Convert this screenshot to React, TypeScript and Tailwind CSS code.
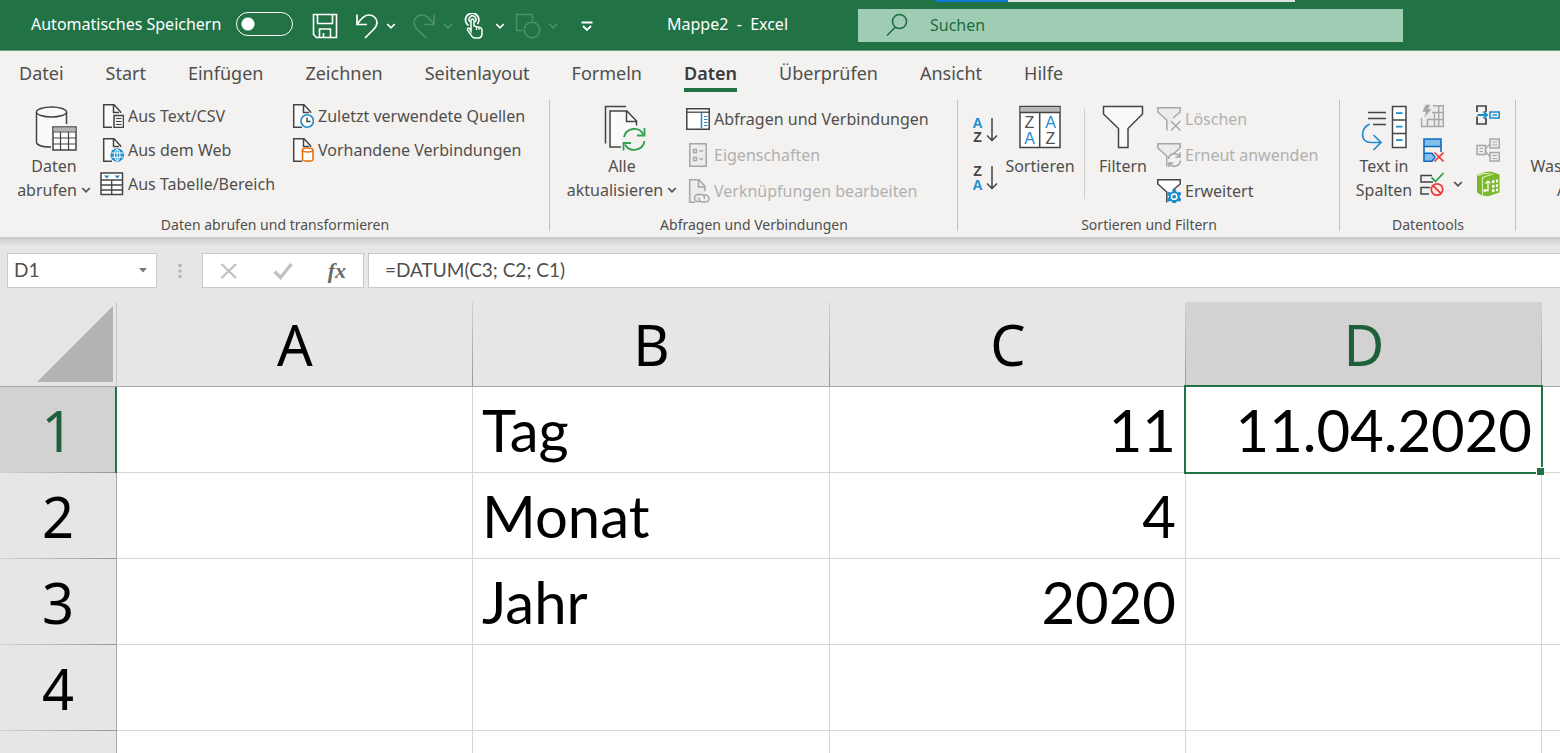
/**
 * Excel workbook window: title bar, data ribbon, formula bar and sheet
 */

import React, { useState } from 'react';
import clsx from 'clsx';

const DARK = '#444444';
const GRAY = '#a6a6a6';
const BLUE = '#1e8bcd';
const GREEN = '#2fa14f';

type IconProps = { w?: number; h?: number; className?: string; children?: React.ReactNode };

const Icon: React.FC<IconProps> = ({ w = 24, h = 24, className, children }) => (
  <svg
    width={w}
    height={h}
    viewBox={`0 0 ${w} ${h}`}
    fill="none"
    strokeWidth={1.5}
    className={clsx('shrink-0', className)}
    aria-hidden="true"
  >
    {children}
  </svg>
);

const Chevron: React.FC<{ className?: string }> = ({ className }) => (
  <Icon w={10} h={8} className={className}>
    <path d="M1.2 2l3.8 3.8L8.8 2" stroke="currentColor" strokeWidth={1.7} />
  </Icon>
);

// ---------- Title bar icons ----------

const SaveIcon = () => (
  <Icon w={26} h={26}>
    <path d="M1.5 1.5h23v23h-20l-3-3zM5.5 1.5v9h15v-9M7.5 24.5V16h11v8.5M11.5 24v-4" stroke="#fff" strokeWidth={1.6} />
  </Icon>
);

const UndoIcon: React.FC<{ flip?: boolean }> = ({ flip }) => (
  <Icon w={24} h={26} className={flip ? '-scale-x-100' : ''}>
    <path d="M2 1.5v10h10M2.5 11C6 5.500 9.5 2 14 2c4.500 0 8 3.500 8 7.500 0 3-1.500 5-3.500 7L10 25" stroke="currentColor" strokeWidth={1.7} />
  </Icon>
);

const TouchIcon = () => (
  <Icon w={20} h={26}>
    <path d="M4.5 12.5A6.700 6.700 0 1 1 13.500 11" stroke="#fff" strokeWidth={1.7} />
    <path d="M6 9a3.500 3.500 0 1 1 5 0" stroke="#fff" strokeWidth={1.4} />
    <path d="M7 18V7.500c0-2 3-2 3 0V13l6 1.500c1.500.4 2 1.500 2 2.500v3.500c0 3-2 4.500-4 4.500h-3c-2 0-3-1-4-3l-3.500-5c-.5-1.500 1-2.500 2-1.500z" fill="#217346" stroke="#fff" strokeWidth={1.5} />
    <path d="M12.500 14v3M15 14.500v2.500" stroke="#fff" strokeWidth={1.2} />
  </Icon>
);

const ShapesIcon = () => (
  <Icon w={26} h={26}>
    <path d="M7.5 17.5h-6v-16h16v6" stroke="currentColor" />
    <circle cx="17" cy="17" r="7.7" stroke="currentColor" />
  </Icon>
);

const CustomizeIcon = () => (
  <Icon w={12} h={11}>
    <path d="M.5 1.500h11M2 5l4 4 4-4" stroke="#fff" strokeWidth={1.8} />
  </Icon>
);

// ---------- Ribbon icons ----------

const DatabaseTableIcon = () => (
  <Icon w={48} h={46}>
    <g transform="translate(5 0)">
      <path d="M1.5 7v30c0 3 6 5.500 15 5.500V21H31V7z" fill="#fafafa" />
      <path d="M31.500 19V7M1.500 7v30c0 3 6 5 14.500 5" stroke={DARK} />
      <ellipse cx="16.5" cy="7" rx="15" ry="5" fill="#fafafa" stroke={DARK} />
      <path d="M18 22h23v23H18z" fill="#fff" stroke={DARK} />
      <path d="M18.500 22.500h22v4h-22z" fill="#b3b3b3" />
      <path d="M18 27h23M18 33h23M18 39h23M25.500 27v18M33.500 27v18" stroke={DARK} strokeWidth={1.2} />
    </g>
  </Icon>
);

const PagePath = () => (
  <>
    <path d="M4 1h10l6 7v15H4z" fill="#fafafa" />
    <path d="M12 23.200H3.700V.8H14l6.500 7V9M13.500 1v7.500H19" stroke={DARK} />
  </>
);

const TextCsvIcon = () => (
  <Icon>
    <PagePath />
    <path d="M14 11.500h9.500v12H14z" fill="#f3f2f1" stroke={DARK} />
    <path d="M16 14.500h5.500M16 17.500h5.500M16 20.500h5.500" stroke={DARK} strokeWidth={1.2} />
  </Icon>
);

const WebIcon = () => (
  <Icon>
    <PagePath />
    <circle cx="17.2" cy="17" r="6.8" fill={BLUE} />
    <ellipse cx="17.2" cy="17" rx="2.8" ry="5.6" stroke="#fff" strokeWidth={1} />
    <path d="M11.500 15h11.500M11.500 19.200h11.500M17.200 11v12" stroke="#fff" strokeWidth={1} />
  </Icon>
);

const TableRangeIcon = () => (
  <Icon>
    <path d="M1 1h21.500v21.500H1z" fill="#fff" stroke={DARK} />
    <path d="M1 8h21.500M1 13h21.500M1 18h21.500M11.700 8v14.500" stroke={DARK} strokeWidth={1.3} />
    <path d="M4 3.500h5.500L6.700 6.500zM14.500 3.500H20l-2.700 3z" fill={BLUE} />
  </Icon>
);

const RecentIcon = () => (
  <Icon>
    <PagePath />
    <circle cx="17.2" cy="17" r="6.2" fill="#fff" stroke={BLUE} strokeWidth={1.6} />
    <path d="M17 13.500v4h3.500" stroke={DARK} strokeWidth={1.4} />
  </Icon>
);

const ExistingIcon = () => (
  <Icon>
    <PagePath />
    <path d="M12.500 12v9.500c0 2.200 10.500 2.200 10.500 0V12" fill="#fff" stroke="#e9720e" strokeWidth={1.6} />
    <ellipse cx="17.700" cy="12" rx="5.300" ry="2" fill="#fff" stroke="#e9720e" strokeWidth={1.6} />
  </Icon>
);

const RefreshAllIcon = () => (
  <Icon w={48} h={46}>
    <g transform="translate(6 0)">
      <path d="M6 6h17l9 10v26H6z" fill="#fafafa" />
      <path d="M1.500 38.500v-37H22M17 42H6V6h17l9.500 10v4.500M22.500 6v10.500H32" stroke={DARK} />
      <circle cx="30" cy="34" r="12" fill="#f3f2f1" />
      <path d="M20 32a10.500 10.500 0 0 1 19.500-2.500M40.500 36A10.500 10.500 0 0 1 21 39.500" stroke={GREEN} strokeWidth={1.8} />
      <path d="M40.500 23v7.500H33M19.500 45.500V38H27" stroke={GREEN} strokeWidth={1.8} />
    </g>
  </Icon>
);

const PaneIcon = () => (
  <Icon>
    <path d="M.8 1.800h22.400v20.400H.8z" fill="#fff" stroke={DARK} />
    <path d="M.8 5.200h22.400" stroke={DARK} strokeWidth={1.3} />
    <path d="M15.500 6v15.500" stroke={BLUE} />
    <path d="M18 9.500h3.500M18 12.500h3.500M18 15.500h3.500M18 18.500h3.500" stroke={BLUE} strokeWidth={1.2} />
  </Icon>
);

const PropertiesIcon = () => (
  <Icon>
    <path d="M3.800.8h16.400v22.400H3.800z" fill="#ececec" stroke={GRAY} />
    <path d="M7.500 6.500h3v3h-3zM7.500 14.500h3v3h-3zM13.500 8H17M13.500 16H17" stroke={GRAY} strokeWidth={1.3} />
  </Icon>
);

const EditLinksIcon = () => (
  <Icon>
    <path d="M9 23.200H3.700V.8H13l6 6.500v5M12.500 1v7H19" fill="#ececec" stroke={GRAY} />
    <g stroke={GRAY} strokeWidth={1.5}>
      <path d="M14.500 22.500H12a3.500 3.500 0 0 1 0-7h3a3.500 3.500 0 0 1 3.300 4.500" />
      <path d="M17 16h2.500a3.500 3.500 0 0 1 0 7h-3a3.500 3.500 0 0 1-3.300-4.500" />
    </g>
  </Icon>
);

const SortIcon: React.FC<{ desc?: boolean }> = ({ desc }) => (
  <span className="flex items-center gap-[3px]">
    <span className="flex flex-col font-['Liberation_Sans',sans-serif] text-[14px] leading-[14px] font-bold">
      <span className={desc ? 'text-[#444444]' : 'text-[#1e8bcd]'}>{desc ? 'Z' : 'A'}</span>
      <span className={desc ? 'text-[#1e8bcd]' : 'text-[#444444]'}>{desc ? 'A' : 'Z'}</span>
    </span>
    <Icon w={12} h={26}>
      <path d="M6 1v22.500M1 18.500l5 5 5-5" stroke={DARK} />
    </Icon>
  </span>
);

const SortDialogIcon = () => (
  <span className="relative block h-[46px] w-[42px]">
    <Icon w={42} h={46}>
      <path d="M1 1.500h40v41H1z" fill="#fff" stroke={DARK} />
      <path d="M1.500 2h39v5h-39z" fill="#b8b8b8" />
      <path d="M1 7.500h40M20.700 7.500v35" stroke={DARK} />
    </Icon>
    <span className="absolute inset-x-0 top-[10px] grid grid-cols-2 text-center font-['Liberation_Sans',sans-serif] text-[16px] leading-4">
      <span>Z</span>
      <span className="text-[#1e8bcd]">A</span>
      <span className="text-[#1e8bcd]">A</span>
      <span>Z</span>
    </span>
  </span>
);

const FilterIcon = () => (
  <Icon w={42} h={46}>
    <path d="M1.500 1.500h39V9L26 23.500v19h-9.500v-19L1.500 9z" fill="#fafafa" stroke={DARK} />
  </Icon>
);

const SmallFunnel: React.FC<{ color: string }> = ({ color }) => (
  <>
    <path d="M1 1h22v4l-8 7v6h-5v-5.500L1 5z" fill={color === DARK ? '#fff' : '#ececec'} />
    <path d="M9.800 23.500V13L.8 5V.8h22.400V5L16 11" stroke={color} />
  </>
);

const ClearFilterIcon = () => (
  <Icon>
    <SmallFunnel color={GRAY} />
    <path d="M14 14l9.500 9.500M23.500 14L14 23.500" stroke={GRAY} strokeWidth={1.4} />
  </Icon>
);

const ReapplyIcon = () => (
  <Icon>
    <SmallFunnel color={GRAY} />
    <circle cx="17.500" cy="17" r="7" fill="#f3f2f1" />
    <path d="M11.500 16a6 6 0 0 1 11-2.500M23.300 17.500a6 6 0 0 1-11 3M23 9.500V14h-4.500M12 24v-4h4.500" stroke={GRAY} strokeWidth={1.6} />
  </Icon>
);

const AdvancedIcon = () => (
  <Icon>
    <SmallFunnel color={DARK} />
    <path
      d="M15.800 10.300h2.900l.6 2.300 1.500.8 2.200-.7 1.400 2.500-1.700 1.700v1.700l1.700 1.600-1.400 2.500-2.200-.6-1.500.8-.6 2.200h-2.900l-.6-2.200-1.500-.8-2.200.6-1.400-2.500 1.700-1.600v-1.700l-1.700-1.700 1.400-2.500 2.200.7 1.500-.8z"
      fill={BLUE}
    />
    <circle cx="17.200" cy="17.700" r="3.400" fill="#fff" />
    <circle cx="17.200" cy="17.700" r="1.900" fill={BLUE} />
  </Icon>
);

const TextToColumnsIcon = () => (
  <Icon w={46} h={46}>
    <path d="M7 7.500h18M7 13.500h18M12 19.500h13" stroke={DARK} />
    <path d="M8.500 19C-1 24-1 37.500 10 37.500h9.500M12.500 30l7.500 7.500-7.500 7.500" stroke={BLUE} strokeWidth={1.7} />
    <path d="M31.500 1.500H45v41H31.500zM31.500 15H45M31.500 28.500H45" fill="#fff" stroke={DARK} />
    <path d="M35 8.200h6.500M35 21.700h6.500M35 35.200h6.500" stroke={BLUE} strokeWidth={1.7} />
  </Icon>
);

const FlashFillIcon = () => (
  <Icon>
    <path d="M11 1.500h12v21H1.500V14" fill="#ececec" />
    <path d="M13 1.700h10.300v20.800H1.500V14M7 15.500h16M12 8.500h11M7.500 15v7.500M14.500 9v13.500M18.700 2v20" stroke={GRAY} strokeWidth={1.4} />
    <path d="M5.500.5h5L8.500 5H12L4 14l1.500-6H2z" fill={GRAY} stroke="#f3f2f1" strokeWidth={0.5} />
  </Icon>
);

const RemoveDuplicatesIcon = () => (
  <Icon>
    <path d="M4 1h17v7.500H4zM4 15.500h9v8H4z" fill="#83beec" />
    <path d="M4 1h17v7.500H4zM21 8.500V14M4 8.500v14.700h8l3-4-3-4H4" stroke="#0f6cbd" strokeWidth={1.6} />
    <path d="M14.500 14.500l9 9M23.500 14.500l-9 9" stroke="#f03a3a" strokeWidth={1.6} />
  </Icon>
);

const ValidationIcon = () => (
  <Icon>
    <path d="M12 3.500H1V10h12M10 15.500H1V22h8" stroke={DARK} />
    <path d="M11.500 5.500l4 4L23.500 1" stroke={GREEN} strokeWidth={1.8} />
    <circle cx="17" cy="17.500" r="5.700" stroke="#f03a3a" strokeWidth={1.8} />
    <path d="M13 13.500l8 8" stroke="#f03a3a" strokeWidth={1.8} />
  </Icon>
);

const ConsolidateIcon = () => (
  <Icon>
    <path d="M1 8V2h9v6M1 12.500V20h9v-6" stroke={DARK} strokeWidth={1.7} />
    <path d="M1.500 11H11M7.500 7.500L11 11l-3.500 3.500" stroke={BLUE} strokeWidth={1.8} />
    <path d="M14 8h9.200v6H14zM16.500 11H21" stroke={BLUE} strokeWidth={1.6} />
  </Icon>
);

const RelationsIcon = () => (
  <Icon>
    <path d="M1 7.500h8.500v9H1zM14 1h9.200v9H14zM14 14.500h9.200v8.500H14z" fill="#ececec" stroke={GRAY} />
    <path d="M9.500 10.500L14 6M9.500 13.500l4.500 5M3.500 10.500H7M3.500 13.500H7M16.500 4H21M16.500 7H21M16.500 17.500H21M16.500 20.500H21" stroke={GRAY} strokeWidth={1.2} />
  </Icon>
);

const DataModelIcon = () => (
  <Icon w={24} h={26}>
    <path d="M1 4L10 .8h6l7.500 2.700v18L12 25.300 6 24.500 1 21.500z" fill="#7ab929" />
    <path d="M2 4.800L7.500 2.500h6M6.500 24V6.500l11-3.700" stroke="#d9efb8" strokeWidth={1.1} />
    <path d="M8.500 19.500h3.500V10M9.500 12.500L12 10l2.500 2M9.500 18l-1.500 1.500L9.500 21" stroke="#fff" strokeWidth={1.3} />
    <path d="M16 9.500l2.500-.4v2.800l-2.500.3zM20 8.800l2-.3v2.800l-2 .3zM16 14l2.500-.3v2.800l-2.500.5zM20 13.400l2-.3v2.700l-2 .4zM16 18.600l2.500-.5v2.600l-2.500.5zM20 17.800l2-.4v2.500l-2 .5z" fill="#fff" />
  </Icon>
);

// ---------- Ribbon building blocks ----------

const Group: React.FC<{ label: string; className: string; children: React.ReactNode }> = ({ label, className, children }) => (
  <section className={clsx('relative flex shrink-0 flex-col pl-3', className)} aria-label={label}>
    <div className="flex h-[116px] items-start gap-1">{children}</div>
    <h2 className="-ml-3 text-center text-[14px] leading-5">{label}</h2>
    <span className="absolute right-0 top-px bottom-[6px] w-px bg-[#c2c0be]" />
  </section>
);

const BigButton: React.FC<{ icon: React.ReactNode; lines: string[]; menu?: boolean; className: string }> = ({ icon, lines, menu, className }) => (
  <button type="button" className={clsx('flex shrink-0 flex-col items-center pt-[6px] leading-6', className)}>
    {icon}
    <span className="mt-[3px] flex flex-col items-center whitespace-nowrap">
      {lines.map((line, i) => (
        <span key={line} className="flex items-center gap-1">
          {line}
          {menu && i === lines.length - 1 && <Chevron />}
        </span>
      ))}
    </span>
  </button>
);

const SmallButton: React.FC<{ icon: React.ReactNode; label: string; tall?: boolean; disabled?: boolean }> = ({ icon, label, tall, disabled }) => (
  <button
    type="button"
    disabled={disabled}
    className={clsx('flex items-center gap-1 whitespace-nowrap disabled:text-[#b1b0af]', tall ? 'h-9' : 'h-[34px]')}
  >
    {icon}
    {label}
  </button>
);

const IconButton: React.FC<{ label: string; disabled?: boolean; className?: string; children: React.ReactNode }> = ({ label, disabled, className, children }) => (
  <button type="button" aria-label={label} disabled={disabled} className={clsx('flex shrink-0 items-center', className)}>
    {children}
  </button>
);

// ---------- Sections ----------

const TitleBar: React.FC = () => {
  const [autosave, setAutosave] = useState(false);

  return (
    <header className="relative flex h-[51px] items-center border-b border-[#6fa587] bg-[#217346] pb-[2px] text-white">
      <div className="flex w-[667px] shrink-0 items-center pl-[31px]">
        <label htmlFor="autosave" className="w-[205px] text-[16px] whitespace-nowrap">Automatisches Speichern</label>
        <input
          id="autosave"
          type="checkbox"
          role="switch"
          checked={autosave}
          onChange={(e) => setAutosave(e.target.checked)}
          className="h-6 w-[57px] appearance-none rounded-full border border-white bg-[radial-gradient(circle_at_11px_11px,#fff_6px,transparent_7px)]"
        />
        <div className="flex items-center gap-[7px] pt-1 pl-[19px]">
          <IconButton label="Speichern" className="mr-[10px]"><SaveIcon /></IconButton>
          <IconButton label="Rückgängig"><UndoIcon /></IconButton>
          <IconButton label="Rückgängig-Liste"><Chevron /></IconButton>
          <IconButton label="Wiederholen" disabled className="ml-[9px] text-[#4c8f6b]"><UndoIcon flip /></IconButton>
          <IconButton label="Wiederholen-Liste" disabled className="text-[#4c8f6b]"><Chevron /></IconButton>
          <IconButton label="Touch-/Mausmodus" className="ml-1"><TouchIcon /></IconButton>
          <IconButton label="Modus-Liste" className="ml-1"><Chevron /></IconButton>
          <IconButton label="Formen" disabled className="ml-[3px] text-[#4c8f6b]"><ShapesIcon /></IconButton>
          <IconButton label="Formen-Liste" disabled className="text-[#4c8f6b]"><Chevron /></IconButton>
          <IconButton label="Symbolleiste anpassen" className="ml-4"><CustomizeIcon /></IconButton>
        </div>
      </div>
      <h1 className="w-[191px] shrink-0 text-[16px] whitespace-pre">Mappe2  -  Excel</h1>
      <label className="mt-[2px] flex h-[33px] w-[545px] items-center gap-[22px] bg-[#9fcdb3] pl-7 text-[#1e6b41]">
        <Icon w={22} h={24}>
          <circle cx="13.500" cy="8.500" r="7" stroke="currentColor" strokeWidth={1.6} />
          <path d="M9 14.500L1 22.500" stroke="currentColor" strokeWidth={1.6} />
        </Icon>
        <input type="search" placeholder="Suchen" className="w-full bg-transparent text-[16px] outline-none placeholder:text-[#1e6b41]" />
      </label>
      {/* Sliver of the bar docked above the window */}
      <div className="absolute top-0 left-[60%] flex h-[2px] w-[23%]">
        <span className="w-[20%] bg-[#0a78d4]" />
        <span className="flex-1 bg-[#dfe3e1]" />
      </div>
    </header>
  );
};

const TABS = ['Datei', 'Start', 'Einfügen', 'Zeichnen', 'Seitenlayout', 'Formeln', 'Daten', 'Überprüfen', 'Ansicht', 'Hilfe'];

const Tabs: React.FC = () => (
  <nav className="flex h-12 gap-[42px] bg-[#f3f2f1] pl-[19px] text-[18px]">
    {TABS.map((tab) => (
      <a
        key={tab}
        href="#"
        className={clsx(
          'mb-[7px] flex items-center border-b-4 pt-[7px]',
          tab === 'Daten' ? 'border-[#217346] font-semibold text-[#3b3a39]' : 'border-transparent'
        )}
      >
        {tab}
      </a>
    ))}
  </nav>
);

const Ribbon: React.FC = () => (
  <div className="flex h-[138px] overflow-hidden bg-[#f3f2f1] text-[16px]">
    <Group label="Daten abrufen und transformieren" className="w-[550px]">
      <BigButton icon={<DatabaseTableIcon />} lines={['Daten', 'abrufen']} menu className="w-[84px]" />
      <div className="w-[186px]">
        <SmallButton icon={<TextCsvIcon />} label="Aus Text/CSV" />
        <SmallButton icon={<WebIcon />} label="Aus dem Web" />
        <SmallButton icon={<TableRangeIcon />} label="Aus Tabelle/Bereich" />
      </div>
      <div>
        <SmallButton icon={<RecentIcon />} label="Zuletzt verwendete Quellen" />
        <SmallButton icon={<ExistingIcon />} label="Vorhandene Verbindungen" />
      </div>
    </Group>

    <Group label="Abfragen und Verbindungen" className="w-[408px]">
      <BigButton icon={<RefreshAllIcon />} lines={['Alle', 'aktualisieren']} menu className="w-[120px]" />
      <div className="pt-[2px]">
        <SmallButton tall icon={<PaneIcon />} label="Abfragen und Verbindungen" />
        <SmallButton tall disabled icon={<PropertiesIcon />} label="Eigenschaften" />
        <SmallButton tall disabled icon={<EditLinksIcon />} label="Verknüpfungen bearbeiten" />
      </div>
    </Group>

    <Group label="Sortieren und Filtern" className="w-[382px]">
      <div className="flex w-[30px] flex-col items-center gap-5 pt-[17px]">
        <IconButton label="Aufsteigend sortieren"><SortIcon /></IconButton>
        <IconButton label="Absteigend sortieren"><SortIcon desc /></IconButton>
      </div>
      <BigButton icon={<SortDialogIcon />} lines={['Sortieren']} className="w-[72px]" />
      <span className="mx-1 mt-[10px] h-[90px] w-px bg-[#cfcdcb]" />
      <BigButton icon={<FilterIcon />} lines={['Filtern']} className="w-[60px]" />
      <div className="pt-[2px]">
        <SmallButton tall disabled icon={<ClearFilterIcon />} label="Löschen" />
        <SmallButton tall disabled icon={<ReapplyIcon />} label="Erneut anwenden" />
        <SmallButton tall icon={<AdvancedIcon />} label="Erweitert" />
      </div>
    </Group>

    <Group label="Datentools" className="w-[176px]">
      <BigButton icon={<TextToColumnsIcon />} lines={['Text in', 'Spalten']} className="w-[64px]" />
      <div className="w-[52px]">
        <IconButton label="Blitzvorschau" disabled className="h-[34px]"><FlashFillIcon /></IconButton>
        <IconButton label="Duplikate entfernen" className="h-[34px]"><RemoveDuplicatesIcon /></IconButton>
        <IconButton label="Datenüberprüfung" className="h-[34px] gap-[9px]"><ValidationIcon /><Chevron /></IconButton>
      </div>
      <div>
        <IconButton label="Konsolidieren" className="h-[34px]"><ConsolidateIcon /></IconButton>
        <IconButton label="Beziehungen" disabled className="h-[34px]"><RelationsIcon /></IconButton>
        <IconButton label="Datenmodell verwalten" className="h-[34px]"><DataModelIcon /></IconButton>
      </div>
    </Group>

    <div className="shrink-0 pl-4">
      <BigButton icon={<Icon w={42} h={46} />} lines={['Was-wäre-wenn-', 'Analyse']} menu className="w-[122px]" />
    </div>
  </div>
);

const FormulaBar: React.FC = () => {
  const [formula, setFormula] = useState('=DATUM(C3; C2; C1)');

  return (
    <div className="flex bg-[#e6e6e6] bg-[linear-gradient(#c9c9c9,#e6e6e6_9px)] pt-4 pb-[14px] pl-[7px] font-['Lato',sans-serif] text-[19px]">
      <div className="flex h-[35px] w-[150px] items-center border border-[#c9c9c9] bg-white px-[6px]">
        <input aria-label="Namenfeld" defaultValue="D1" className="w-full min-w-0 outline-none" />
        <IconButton label="Namen anzeigen" className="pr-[3px]">
          <Icon w={8} h={5}><path d="M0 0h8L4 4.500z" fill="#777" /></Icon>
        </IconButton>
      </div>
      <div className="flex w-[45px] items-center justify-center">
        <Icon w={4} h={16}><path d="M.5 1h3v3h-3zM.5 6.500h3v3h-3zM.5 12h3v3h-3z" fill="#b5b5b5" /></Icon>
      </div>
      <div className="flex w-[162px] items-center justify-between border border-[#c9c9c9] bg-white px-[17px]">
        <IconButton label="Abbrechen">
          <Icon w={18} h={18}><path d="M1.500 2L16 16M16 2L1.500 16" stroke="#c2c2c2" strokeWidth={2.4} /></Icon>
        </IconButton>
        <IconButton label="Eingeben">
          <Icon w={20} h={18}><path d="M1.500 9.500l6 6L18.500 2" stroke="#c2c2c2" strokeWidth={3.4} /></Icon>
        </IconButton>
        <button
          type="button"
          aria-label="Funktion einfügen"
          className="font-['Liberation_Serif',serif] text-[22px] leading-6 font-bold text-[#6a6a6a] italic"
        >
          fx
        </button>
      </div>
      <input
        aria-label="Bearbeitungsleiste"
        value={formula}
        onChange={(e) => setFormula(e.target.value)}
        className="ml-1 min-w-0 flex-1 border border-r-0 border-[#c9c9c9] bg-white pl-4 outline-none"
      />
    </div>
  );
};

const COLUMNS = ['A', 'B', 'C', 'D', ''];

const ROWS: string[][] = [
  ['', 'Tag', '11', '11.04.2020', ''],
  ['', 'Monat', '4', '', ''],
  ['', 'Jahr', '2020', '', ''],
  ['', '', '', '', ''],
  ['', '', '', '', ''],
];

const Sheet: React.FC = () => (
  <div className="min-h-0 flex-1 overflow-hidden bg-white">
    <table className="w-full table-fixed border-separate border-spacing-0 text-[56px] leading-[70px] text-black">
      <colgroup>
        <col className="w-[117px]" />
        <col className="w-[356px]" />
        <col className="w-[357px]" />
        <col className="w-[356px]" />
        <col className="w-[356px]" />
        <col />
      </colgroup>
      <thead>
        <tr className="h-[85px]">
          <th className="border-r border-b border-r-[#c6c6c6] border-b-[#a8a8a8] bg-[#e6e6e6] p-0">
            <Icon w={76} h={76} className="mr-[3px] ml-auto"><path d="M76 0v76H0z" fill="#b4b4b4" /></Icon>
          </th>
          {COLUMNS.map((name, i) => (
            <th
              key={i}
              scope="col"
              className={clsx(
                'border-b border-b-[#a8a8a8] p-0 font-normal',
                name && 'bg-[linear-gradient(#d2d2d2,#979797)] bg-[length:1px_100%] bg-right bg-no-repeat',
                name === 'D' ? 'bg-[#d2d2d2] text-[#1e6039]' : 'bg-[#e6e6e6]'
              )}
            >
              {name}
            </th>
          ))}
        </tr>
      </thead>
      <tbody>
        {ROWS.map((cells, r) => (
          <tr key={r} className="h-[86px]">
            <th
              scope="row"
              className={clsx(
                'bg-[linear-gradient(90deg,#d2d2d2,#979797)] bg-[length:100%_1px] bg-bottom bg-no-repeat p-0 font-normal',
                r === 0 ? 'border-r-2 border-[#217346] bg-[#d2d2d2] text-[#1e6039]' : 'border-r border-[#a8a8a8] bg-[#e6e6e6]'
              )}
            >
              {r + 1}
            </th>
            {cells.map((value, c) => {
              const selected = r === 0 && c === 3;
              return (
                <td
                  key={c}
                  className={clsx(
                    "border-b border-[#d6d6d6] px-[9px] py-0 font-['Lato',sans-serif] text-[58px] whitespace-nowrap",
                    c < 4 && 'border-r',
                    /^\d/.test(value) ? 'text-right' : 'text-left',
                    selected && 'relative'
                  )}
                >
                  {value}
                  {selected && (
                    <>
                      <span className="absolute -inset-[2px] border-2 border-[#217346]" />
                      <span className="absolute -right-[3px] -bottom-[3px] size-[8px] border border-r-0 border-b-0 border-white bg-[#217346]" />
                    </>
                  )}
                </td>
              );
            })}
          </tr>
        ))}
      </tbody>
    </table>
  </div>
);

const App: React.FC = () => (
  <div className="flex h-screen flex-col overflow-hidden bg-[#e6e6e6] font-['Noto_Sans',sans-serif] text-[#504f4d]">
    <TitleBar />
    <Tabs />
    <Ribbon />
    <FormulaBar />
    <Sheet />
  </div>
);

export default App;
